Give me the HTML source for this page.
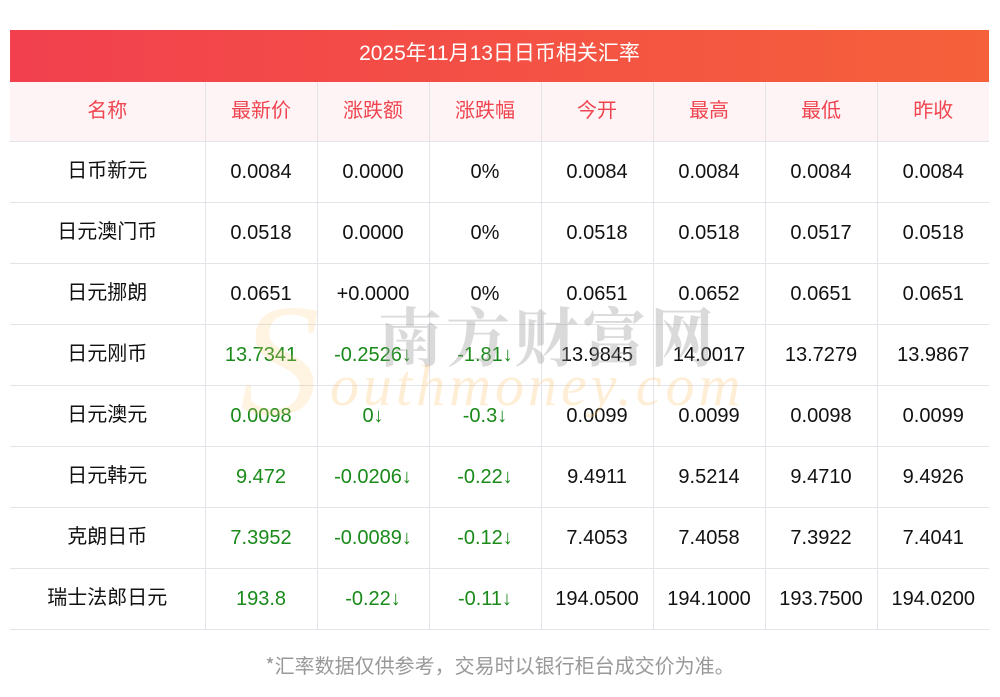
<!DOCTYPE html>
<html><head><meta charset="utf-8"><style>
body{margin:0;background:#fff;width:1000px;height:697px;position:relative;overflow:hidden;font-family:"Liberation Sans","Noto Sans CJK SC",sans-serif;}
.title{position:absolute;left:10px;top:30px;width:979px;height:52px;background:linear-gradient(90deg,#f2404f,#f5613a);color:#fff;font-size:21px;line-height:48px;text-align:center;}
table{position:absolute;left:10px;top:82px;border-collapse:collapse;table-layout:fixed;width:979px;}
td{border:1px solid #e3e3ea;height:60px;text-align:center;font-size:20px;color:#111;padding:0;line-height:24px;}
td.c{font-family:"Noto Sans CJK SC",sans-serif;}
td.c span,tr.h td span{position:relative;top:-3px;}
tr:first-child td{border-top:none;}
tr td:first-child{border-left:none;}
tr td:last-child{border-right:none;}
tr.h td{background:#fff4f5;color:#f04550;height:59px;font-family:"Noto Sans CJK SC",sans-serif;}
.g{color:#1a8a1a;}
.foot{position:absolute;top:650px;width:1000px;text-align:center;font-size:20px;color:#999;font-family:"Noto Sans CJK SC",sans-serif;}
.wm1{position:absolute;left:378px;top:288px;font-size:64px;color:rgba(150,150,150,0.35);letter-spacing:4px;font-family:"Noto Serif CJK SC",serif;font-weight:bold;z-index:2;}
.wm2{position:absolute;left:330px;top:352px;font-size:58px;color:rgba(255,200,120,0.3);font-style:italic;font-family:"Liberation Serif",serif;letter-spacing:4px;z-index:2;}
.wm3{position:absolute;left:240px;top:280px;font-size:160px;color:rgba(255,200,120,0.22);font-style:italic;font-family:"Liberation Serif",serif;z-index:2;line-height:1;}
</style></head><body>
<div class="title">2025年11月13日日币相关汇率</div>
<table>
<colgroup><col style="width:195px"><col style="width:112px"><col style="width:112px"><col style="width:112px"><col style="width:112px"><col style="width:112px"><col style="width:112px"><col style="width:112px"></colgroup>
<tr class="h"><td><span>名称</span></td><td><span>最新价</span></td><td><span>涨跌额</span></td><td><span>涨跌幅</span></td><td><span>今开</span></td><td><span>最高</span></td><td><span>最低</span></td><td><span>昨收</span></td></tr>
<tr><td class="c"><span>日币新元</span></td><td>0.0084</td><td>0.0000</td><td>0%</td><td>0.0084</td><td>0.0084</td><td>0.0084</td><td>0.0084</td></tr>
<tr><td class="c"><span>日元澳门币</span></td><td>0.0518</td><td>0.0000</td><td>0%</td><td>0.0518</td><td>0.0518</td><td>0.0517</td><td>0.0518</td></tr>
<tr><td class="c"><span>日元挪朗</span></td><td>0.0651</td><td>+0.0000</td><td>0%</td><td>0.0651</td><td>0.0652</td><td>0.0651</td><td>0.0651</td></tr>
<tr><td class="c"><span>日元刚币</span></td><td class="g">13.7341</td><td class="g">-0.2526↓</td><td class="g">-1.81↓</td><td>13.9845</td><td>14.0017</td><td>13.7279</td><td>13.9867</td></tr>
<tr><td class="c"><span>日元澳元</span></td><td class="g">0.0098</td><td class="g">0↓</td><td class="g">-0.3↓</td><td>0.0099</td><td>0.0099</td><td>0.0098</td><td>0.0099</td></tr>
<tr><td class="c"><span>日元韩元</span></td><td class="g">9.472</td><td class="g">-0.0206↓</td><td class="g">-0.22↓</td><td>9.4911</td><td>9.5214</td><td>9.4710</td><td>9.4926</td></tr>
<tr><td class="c"><span>克朗日币</span></td><td class="g">7.3952</td><td class="g">-0.0089↓</td><td class="g">-0.12↓</td><td>7.4053</td><td>7.4058</td><td>7.3922</td><td>7.4041</td></tr>
<tr><td class="c"><span>瑞士法郎日元</span></td><td class="g">193.8</td><td class="g">-0.22↓</td><td class="g">-0.11↓</td><td>194.0500</td><td>194.1000</td><td>193.7500</td><td>194.0200</td></tr>
</table>
<div class="wm3">S</div>
<div class="wm1">南方财富网</div>
<div class="wm2">outhmoney.com</div>
<div class="foot">*汇率数据仅供参考，交易时以银行柜台成交价为准。</div>
</body></html>
